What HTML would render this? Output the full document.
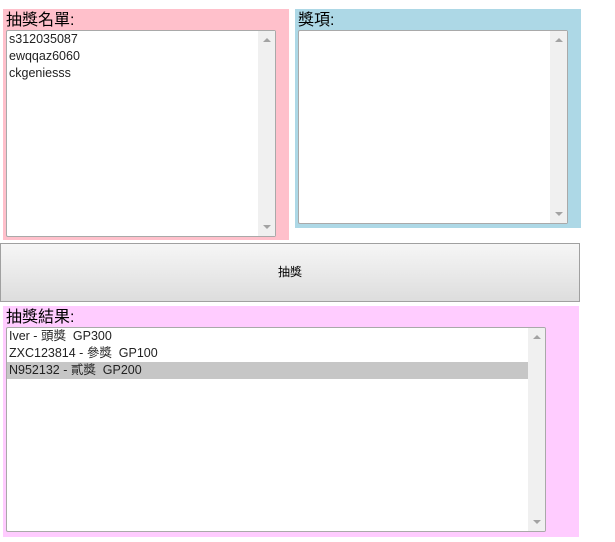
<!DOCTYPE html><html><head><meta charset="utf-8"><style>
body{margin:0;width:615px;height:542px;background:#fff;font-family:"Liberation Sans","Noto Sans CJK TC",sans-serif;position:relative;overflow:hidden}
.box{position:absolute}
.lbl{position:absolute;left:3px;top:2px;font-size:16px;line-height:19px;color:#000}
.ta{position:absolute;background:#fff;border:1px solid #a9a9a9;border-radius:2px;box-sizing:border-box;font-size:12.5px;line-height:17px;color:#222}
.sb{position:absolute;top:0;right:0;bottom:0;width:17px;background:#f0f0f0}
.up,.dn{position:absolute;left:5px;width:0;height:0;border-left:4px solid transparent;border-right:4px solid transparent}
.up{top:7px;border-bottom:4px solid #a3a3a3}
.dn{bottom:7px;border-top:4px solid #a3a3a3}
.ln{padding-left:2px;white-space:nowrap}
</style></head><body>
<div class="box" style="left:3px;top:9px;width:286px;height:231px;background:#ffc0cb">
<div class="lbl">抽獎名單:</div>
<div class="ta" style="left:3px;top:21px;width:270px;height:207px">
<div class="ln">s312035087</div><div class="ln">ewqqaz6060</div><div class="ln">ckgeniesss</div>
<div class="sb"><div class="up"></div><div class="dn"></div></div></div></div>
<div class="box" style="left:295px;top:9px;width:286px;height:219px;background:#add8e6">
<div class="lbl">獎項:</div>
<div class="ta" style="left:3px;top:21px;width:270px;height:194px">
<div class="sb"><div class="up"></div><div class="dn"></div></div></div></div>
<div class="box" style="left:0;top:243px;width:580px;height:59px;box-sizing:border-box;border:1px solid #a0a0a0;background:linear-gradient(#f6f6f6,#dddddd);font-size:12px;text-align:center;line-height:57px">抽獎</div>
<div class="box" style="left:3px;top:306px;width:576px;height:231px;background:#fcf">
<div class="lbl">抽獎結果:</div>
<div class="ta" style="left:3px;top:21px;width:540px;height:205px;overflow:hidden">
<div class="ln">Iver - 頭獎 &nbsp;GP300</div><div class="ln">ZXC123814 - 參獎 &nbsp;GP100</div><div class="ln" style="background:#c6c6c6;width:519px">N952132 - 貳獎 &nbsp;GP200</div>
<div class="sb"><div class="up"></div><div class="dn"></div></div></div></div>
</body></html>
